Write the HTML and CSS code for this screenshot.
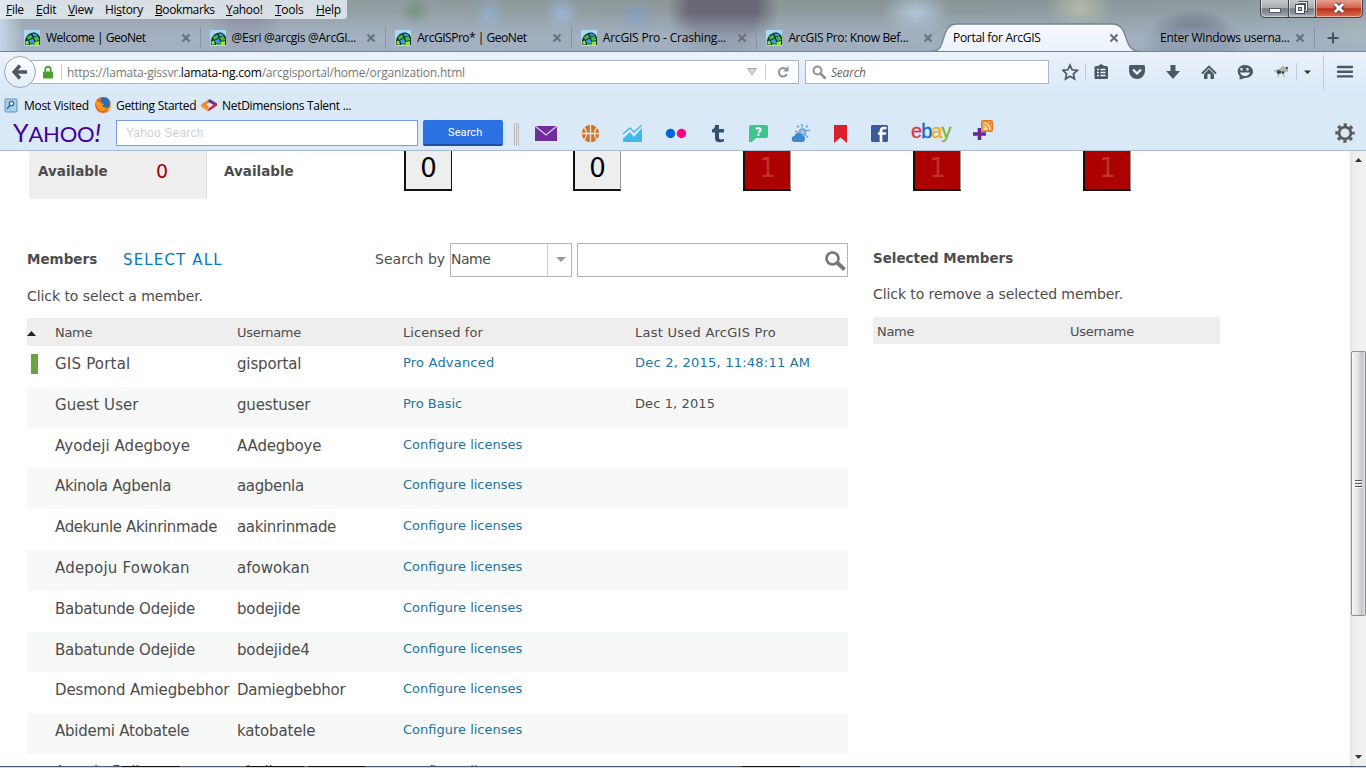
FILE: index.html
```html
<!DOCTYPE html>
<html lang="en">
<head>
<meta charset="utf-8">
<title>Portal for ArcGIS</title>
<link rel="stylesheet" href="styles.css">
</head>
<body>
<svg width="0" height="0" class="defs">
  <defs>
    <symbol id="globe" viewBox="0 0 16 16">
      <rect width="16" height="16" fill="#a9daf5"/>
      <path d="M1 15C0 8 4 3 9 2.500c4 0 6 2 7 5V15z" fill="#123038"/>
      <path d="M3 7l4-2.500 1.500 3L4 10zM9.500 7.500l4-1.500 2 4-4 1z" fill="#3fbf35"/>
      <path d="M8.500 3.500l4 .5 1 1.500-4 1zM5 10.500l4-2 1.500 4.500H6z" fill="#3c9fe6"/>
      <path d="M1.500 11.500l2.500-1 1 4H1.500zM10.500 12l4.500-1v4h-4.500z" fill="#98e23a"/>
      <path d="M6 13.500h4.500V15H6z" fill="#55c14a"/>
    </symbol>
    <symbol id="close" viewBox="0 0 10 10"><path d="M1.500 1.500l7 7m0-7l-7 7" stroke="#66727f" stroke-width="2.200"/></symbol>
  </defs>
</svg>

<header class="titlebar">
  <div class="toprow">
    <nav class="menu">
      <span class="m-file"><u>F</u>ile</span><span class="m-edit"><u>E</u>dit</span><span class="m-view"><u>V</u>iew</span><span class="m-history">Hi<u>s</u>tory</span><span class="m-book"><u>B</u>ookmarks</span><span class="m-yahoo"><u>Y</u>ahoo!</span><span class="m-tools"><u>T</u>ools</span><span class="m-help"><u>H</u>elp</span>
    </nav>
    <svg class="winbtns" width="105" height="19" viewBox="0 0 105 19">
      <defs>
        <linearGradient id="gb" x2="0" y2="1"><stop offset="0" stop-color="#c5c9cc"/><stop offset=".45" stop-color="#a8adb1"/><stop offset=".5" stop-color="#747a80"/><stop offset="1" stop-color="#a9b0b5"/></linearGradient>
        <linearGradient id="rb" x2="0" y2="1"><stop offset="0" stop-color="#e5a091"/><stop offset=".45" stop-color="#d2614a"/><stop offset=".5" stop-color="#b9301a"/><stop offset="1" stop-color="#dc7454"/></linearGradient>
      </defs>
      <path d="M.5 0v13q0 4.500 4.500 4.500H57V0z" fill="url(#gb)"/>
      <path d="M56 0v17.500h42q4.500 0 4.500-4.500V0z" fill="url(#rb)"/>
      <path d="M.5 0v13q0 4.500 4.500 4.500H98q4.500 0 4.500-4.500V0M28.500 0v17M55.500 0v17" fill="none" stroke="#3f474e"/>
      <path d="M1.500 0v12.500q0 4 4 4H27M29.500 0v16h25V0M56.500 0v16.500H97q4.500 0 4.500-4V0" fill="none" stroke="#fff" stroke-opacity=".45"/>
      <rect x="9.500" y="8.500" width="11" height="4" fill="#fff" stroke="#555b66"/>
      <path d="M38.500 2.500h8v8h-2" fill="none" stroke="#4c5260" stroke-width="3"/><path d="M38.500 2.500h8v8h-2" fill="none" stroke="#fff"/>
      <rect x="35.500" y="4.500" width="9" height="9" fill="#fff" stroke="#4c5260"/><rect x="38.500" y="7.500" width="3" height="3" fill="#b0b5bb" stroke="#4c5260"/>
      <path d="M75 4l8 8m0-8l-8 8" stroke="#4a3c44" stroke-width="5"/><path d="M75 4l8 8m0-8l-8 8" stroke="#fff" stroke-width="3"/>
    </svg>
  </div>
  <div class="tabs">
    <div class="tab"><svg class="fav"><use href="#globe"/></svg><span>Welcome | GeoNet</span><svg class="x"><use href="#close"/></svg></div>
    <div class="tab"><svg class="fav"><use href="#globe"/></svg><span class="t2">@Esri @arcgis @ArcGI...</span><svg class="x"><use href="#close"/></svg></div>
    <div class="tab"><svg class="fav"><use href="#globe"/></svg><span>ArcGISPro* | GeoNet</span><svg class="x"><use href="#close"/></svg></div>
    <div class="tab"><svg class="fav"><use href="#globe"/></svg><span class="t4">ArcGIS Pro - Crashing...</span><svg class="x"><use href="#close"/></svg></div>
    <div class="tab noline"><svg class="fav"><use href="#globe"/></svg><span class="t5">ArcGIS Pro: Know Bef...</span><svg class="x"><use href="#close"/></svg></div>
    <div class="tab active">
      <svg class="shape" width="214" height="30" viewBox="0 0 214 30">
        <defs><linearGradient id="tg" x2="0" y2="1"><stop offset="0" stop-color="#f7fafd"/><stop offset="1" stop-color="#eaf1fa"/></linearGradient></defs>
        <path d="M2 30V28.500C18 28.500 9 1 27 1H182C201 1 191 28.500 210 28.500V30z" fill="url(#tg)"/>
        <path d="M2 28.500C18 28.500 9 1 27 1H182C201 1 191 28.500 210 28.500" fill="none" stroke="#75838f" stroke-width="1.300"/>
      </svg>
      <span>Portal for ArcGIS</span><svg class="x"><use href="#close"/></svg>
    </div>
    <div class="tab last"><span>Enter Windows userna...</span><svg class="x"><use href="#close"/></svg></div>
    <svg class="plus" width="12" height="12" viewBox="0 0 12 12"><path d="M6 .5v11M.5 6h11" stroke="#47525d" stroke-width="2"/></svg>
  </div>
</header>

<section class="chrome">
  <div class="navbar">
    <div class="back"><svg width="16" height="16" viewBox="0 0 16 16"><path d="M8 1.500L2 8l6 6.500M2.500 8H15" fill="none" stroke="#4c5967" stroke-width="3.400"/></svg></div>
    <div class="urlbar">
      <svg width="10" height="13" viewBox="0 0 10 13"><path d="M2.300 7V3.500a2.700 2.700 0 015.400 0V7" fill="none" stroke="#4aa02c" stroke-width="1.800"/><rect y="5.500" width="10" height="7" rx="1" fill="#4aa02c"/></svg>
      <i class="vline"></i>
      <span class="url">https://lamata-gissvr.<b>lamata-ng.com</b>/arcgisportal/home/organization.html</span>
      <svg class="drop" width="10" height="8" viewBox="0 0 10 8"><path d="M.5 .5h9L5 7z" fill="#d5d9df" stroke="#a5acb5"/></svg>
      <i class="vline"></i>
      <svg class="reload" width="12" height="12" viewBox="0 0 12 12"><path d="M9.500 3.500A4.300 4.300 0 106 10.600a4.300 4.300 0 003.800-2.500" fill="none" stroke="#8894a2" stroke-width="2"/><path d="M11.500 0v5.500H6z" fill="#8894a2"/></svg>
    </div>
    <div class="searchbar">
      <svg width="15" height="15" viewBox="0 0 15 15"><circle cx="5.500" cy="5.500" r="4" fill="none" stroke="#8d9298" stroke-width="2"/><path d="M8.500 8.500l5 5" stroke="#8d9298" stroke-width="2.600"/></svg>
      <em>Search</em>
    </div>
    <svg class="tools" width="304" height="40" viewBox="1062 52 304 40">
      <g fill="#4b5866">
        <path d="M1070 65l2.100 4.800 5.200.5-3.900 3.500 1.100 5.100-4.500-2.700-4.500 2.700 1.100-5.100-3.900-3.500 5.200-.5z" fill="none" stroke="#4b5866" stroke-width="1.700"/>
        <path d="M1098 66h-2q-1.500 0-1.500 1.500V78q0 1 1 1h11.500q1 0 1-1V67.500q0-1.500-1.500-1.500h-2l-3.500-2z"/>
        <path d="M1097 69.500h2m1.500 0h5m-8.500 3h2m1.500 0h5m-8.500 3h2m1.500 0h5" stroke="#eef4fb" stroke-width="1.500"/>
        <path d="M1130.500 65h13q1.500 0 1.500 1.500V71a8 8 0 01-16 0v-4.500q0-1.500 1.500-1.500z"/>
        <path d="M1133 69.500l4 4 4-4" fill="none" stroke="#eef4fb" stroke-width="2.200"/>
        <path d="M1170.500 65h5v6h4.500l-7 8-7-8h4.500z"/>
        <path d="M1202 73.500l7-7 7 7" fill="none" stroke="#4b5866" stroke-width="1.900"/>
        <path d="M1204 74l5-5 5 5v5h-3.500v-5h-3v5h-3.500z"/>
        <path d="M1245 65c5 0 8 3 8 6.500s-3 6.500-8 6.500c-2 0-3 2-6 1 1-1 1-2 .5-3-4-5-1-11 5.500-11z"/>
        <path d="M1241.500 68v2.500m6-2.500v2.500" stroke="#eef4fb" stroke-width="2"/><path d="M1240 72.500h10q-1.500 3.500-5 3.500t-5-3.500z" fill="#eef4fb"/>
        <path d="M1304 70.500h7l-3.500 3.500z" fill="#2c2c2c"/>
        <path d="M1338 67h14m-14 4.700h14m-14 4.700h14" stroke="#4b5866" stroke-width="2.400" stroke-linecap="round"/>
      </g>
      <path d="M1274 71q5-2 10-1.500M1277 74l4-1m1 0l3 4m-6-4l-1 4m5-5l5-1m-7-3l3-2" fill="none" stroke="#999" stroke-width="1"/>
      <ellipse cx="1284" cy="69.500" rx="4" ry="2.800" fill="#b5b2a8"/><ellipse cx="1279" cy="72" rx="2.500" ry="1.800" fill="#3c3c38"/><circle cx="1287" cy="68" r="1.200" fill="#555"/><circle cx="1283" cy="72.500" r="1.200" fill="#333"/>
      <path d="M1085.500 63v18M1296.500 63v18M1323.500 55v36" stroke="#c2ccd8"/>
    </svg>
  </div>
  <div class="bookmarks">
    <svg width="14" height="15" viewBox="0 0 14 15"><rect x="1" y="1" width="12" height="13" rx="1" fill="#a8d1ec" stroke="#5c95c0"/><circle cx="7.500" cy="5.500" r="2.200" fill="#e4f3fc" stroke="#2f6c9f" stroke-width="1.300"/><path d="M6 7l-3 4" stroke="#2f6c9f" stroke-width="1.600"/></svg>
    <span class="bk1">Most Visited</span>
    <svg width="16" height="16" viewBox="0 0 16 16"><circle cx="8" cy="8" r="8" fill="#e8681a"/><path d="M6 .5q7-1.500 9 4 1 5-3 6.500-5 0-6-5z" fill="#2a6eb6"/><path d="M1 4l3 1 5 2-2 2q2 3 5 1-1 4-5 4-6-1-6-10z" fill="#f29a1f"/><path d="M14 4q3 6-3 10 6-1 4.500-8z" fill="#fbc82c"/></svg>
    <span class="bk2">Getting Started</span>
    <svg width="16" height="12" viewBox="0 0 16 12"><path d="M0 5.500L7 1l2 2-4 2.500 3 2-2 2z" fill="#f0822e"/><path d="M7 1l2-.8L16 4.500l-2 2.300-6-3.600z" fill="#5d358d"/><path d="M16 4.500v2L8 12l-2-1.500 7-5z" fill="#c82248"/><path d="M0 5.500v2L6 12l2-2z" fill="#f0a02e"/></svg>
    <span class="bk3">NetDimensions Talent ...</span>
  </div>
  <div class="yahoo">
    <span class="ylogo">Y<small>AHOO</small><i>!</i></span>
    <span class="yinput">Yahoo Search</span>
    <span class="ybtn">Search</span>
    <svg class="yicons" width="490" height="34" viewBox="510 115 490 34">
      <path d="M514.500 122v23M516.500 122v23M518.500 122v23" stroke="#b6b8ba"/>
      <rect x="535" y="125" width="22" height="15" fill="#6f2da0"/><path d="M535 125l11 9 11-9" fill="none" stroke="#dcc5ec" stroke-width="1.300"/>
      <circle cx="590.500" cy="132.500" r="8.700" fill="#d8721b"/><path d="M590.500 124v17M582 132.500h17M584 126q5 6.500 0 13M597 126q-5 6.500 0 13" fill="none" stroke="#dbe9f8" stroke-width="1.300"/>
      <path d="M623 141v-6l7-7 4 5 8-8v16z" fill="#3fb8ec"/><path d="M622 136l8-8 4 5 8-9" fill="none" stroke="#dbe9f8" stroke-width="4"/><path d="M623 133l7-6 4 4 8-7" fill="none" stroke="#3fb8ec" stroke-width="1.300"/>
      <circle cx="670.500" cy="132.500" r="4.700" fill="#0063dc"/><circle cx="681.500" cy="132.500" r="4.700" fill="#ff0084"/>
      <path d="M715 124h4v4h5v3.500h-5v5q0 2 2 2l3-.5v2.500q-9 2.500-9-3.500v-5.500h-3v-3q3-.8 3-4.500z" fill="#35516c"/>
      <path d="M751 124h15q2 0 2 2v9q0 2-2 2h-10l-4 4h-3v-15q0-2 2-2z" fill="#3fc48e"/>
      <path d="M756 128.300q3-2.500 4.500 0c.8 2-2 2.200-2 4m0 1v1.700" fill="none" stroke="#fff" stroke-width="2"/>
      <g stroke="#62a7da" stroke-width="1.500"><circle cx="802.500" cy="131" r="3" fill="#9cc8ea"/><path d="M802 123v3.500m0 9v3m-7-8h3m8-1h4m-13-5l2 2m9-2l-2 2m-1 7l3 3"/></g>
      <path d="M795 141a3 3 0 01-.5-6 4.200 4.200 0 018-.5q3 .5 2.500 3.500 0 3-3 3z" fill="#3b8bca"/>
      <path d="M834 124h13v18l-6.500-5.500L834 142z" fill="#da202a"/>
      <rect x="871" y="124" width="17" height="17" rx="1.500" fill="#3c5a99"/><path d="M881 141v-11q0-3 3-3h2.500M878 132.500h8" fill="none" stroke="#fff" stroke-width="2.700"/>
      <path d="M979.500 127v12m-6.500-6h13" stroke="#642b96" stroke-width="3.600"/>
      <rect x="981.500" y="119.500" width="11" height="11" rx="1" fill="#f69432" stroke="#d97a20"/><path d="M983.500 122q6 0 6.500 7M983.500 125q3 .5 3.500 4" fill="none" stroke="#fff" stroke-width="1.200"/><circle cx="984.500" cy="128" r="1" fill="#fff"/>
    </svg>
    <span class="ebay"><i class="e">e</i><i class="b">b</i><i class="a">a</i><i class="y">y</i></span>
    <svg class="gear" width="20" height="20" viewBox="0 0 20 20"><circle cx="10" cy="10" r="5.900" fill="none" stroke="#5c5c5c" stroke-width="2.700"/><circle cx="10" cy="10" r="8.300" fill="none" stroke="#5c5c5c" stroke-width="2.800" stroke-dasharray="3.260 3.260" stroke-dashoffset="1.630"/></svg>
  </div>
</section>

<main class="viewport">
  <div class="page">
    <div class="licenses">
      <div class="availbox"><b>Available</b><span>0</span></div>
      <b class="avail2">Available</b>
      <div class="counts">
        <span class="count full">0</span><span class="count">0</span><span class="count red">1</span><span class="count red">1</span><span class="count red">1</span>
      </div>
    </div>
    <div class="panels">
      <section class="members">
        <div class="bar">
          <b>Members</b><a class="selall">SELECT ALL</a>
          <span class="by">Search by</span>
          <span class="select"><span>Name</span><i><svg width="10" height="5" viewBox="0 0 10 5"><path d="M0 0h10L5 5z" fill="#999"/></svg></i></span>
          <span class="find"><svg width="21" height="20" viewBox="0 0 21 20"><circle cx="7.500" cy="7.500" r="6" fill="none" stroke="#757575" stroke-width="2.600"/><path d="M12.500 12l7 6.500" stroke="#757575" stroke-width="3.800"/></svg></span>
        </div>
        <p class="hint">Click to select a member.</p>
        <div class="row head"><i class="mark"><svg width="9" height="5" viewBox="0 0 9 5"><path d="M0 5h9L4.500 0z" fill="#222"/></svg></i><span class="nm">Name</span><span class="nm">Username</span><span>Licensed for</span><span class="lu">Last Used ArcGIS Pro</span></div>
        <div class="row"><i class="mark"><i class="green"></i></i><span class="gis">GIS Portal</span><span>gisportal</span><a class="pro">Pro Advanced</a><a class="lu">Dec 2, 2015, 11:48:11 AM</a></div>
        <div class="row alt"><i></i><span class="wide">Guest User</span><span>guestuser</span><a>Pro Basic</a><a class="lu plain">Dec 1, 2015</a></div>
        <div class="row"><i></i><span class="wide">Ayodeji Adegboye</span><span>AAdegboye</span><a>Configure licenses</a></div>
        <div class="row alt"><i></i><span class="tight">Akinola Agbenla</span><span class="tight">aagbenla</span><a>Configure licenses</a></div>
        <div class="row"><i></i><span class="tight">Adekunle Akinrinmade</span><span class="tight">aakinrinmade</span><a>Configure licenses</a></div>
        <div class="row alt"><i></i><span class="gis">Adepoju Fowokan</span><span class="wide">afowokan</span><a>Configure licenses</a></div>
        <div class="row"><i></i><span class="semi">Babatunde Odejide</span><span>bodejide</span><a>Configure licenses</a></div>
        <div class="row alt"><i></i><span class="semi">Babatunde Odejide</span><span>bodejide4</span><a>Configure licenses</a></div>
        <div class="row"><i></i><span>Desmond Amiegbebhor</span><span class="semi">Damiegbebhor</span><a>Configure licenses</a></div>
        <div class="row alt"><i></i><span class="semi">Abidemi Atobatele</span><span>katobatele</span><a>Configure licenses</a></div>
        <div class="row"><i></i><span>Amodu Bello</span><span>abello</span><a>Configure licenses</a></div>
      </section>
      <section class="selected">
        <h2>Selected Members</h2>
        <p>Click to remove a selected member.</p>
        <div class="shead"><span>Name</span><span>Username</span></div>
      </section>
    </div>
  </div>
  <aside class="scroll">
    <svg class="up" width="7" height="5" viewBox="0 0 7 5"><path d="M0 4h7L3.500 0z" fill="#333"/></svg>
    <div class="thumb"><i></i><i></i><i></i></div>
    <svg class="down" width="7" height="5" viewBox="0 0 7 5"><path d="M0 0h7L3.500 4z" fill="#333"/></svg>
  </aside>
</main>
<footer class="taskbar"><i class="s1"></i><i class="s2"></i><i class="s3"></i><i class="s4"></i></footer>
</body>
</html>
```

FILE: styles.css
```css
* { box-sizing: border-box; }
body { margin: 0; width: 1366px; height: 768px; overflow: hidden; background: #fff; display: flex; flex-direction: column; font-family: "Open Sans", "Noto Sans", sans-serif; font-size: 12px; color: #000; }
i { font-style: normal; }
svg { flex: none; display: block; }
.defs { position: absolute; }
span, a, b { white-space: nowrap; }

/* title bar with the blurred desktop behind it */
.titlebar { height: 52px; flex: none; display: flex; flex-direction: column; border-bottom: 1px solid #75838f; overflow: hidden;
  background:
    linear-gradient(90deg, #c6d6e8 0, rgba(190,205,222,0) 22px),
    linear-gradient(180deg, transparent 12px, rgba(164,178,196,.75) 38px, rgba(160,174,192,.75)),
    radial-gradient(ellipse 56px 56px at 723px 10px, rgba(98,94,110,.85) 60%, transparent),
    radial-gradient(ellipse 52px 38px at 1193px 48px, rgba(92,98,118,.85) 60%, transparent),
    radial-gradient(ellipse 38px 44px at 245px 22px, rgba(125,122,145,.6) 30%, transparent),
    radial-gradient(ellipse 20px 18px at 637px 18px, rgba(126,157,193,.9), transparent),
    radial-gradient(ellipse 18px 18px at 562px 14px, rgba(155,183,220,.9), transparent),
    radial-gradient(ellipse 16px 18px at 489px 16px, rgba(145,175,208,.9), transparent),
    radial-gradient(ellipse 16px 16px at 415px 12px, rgba(105,140,112,.7), transparent),
    radial-gradient(ellipse 34px 24px at 916px 14px, rgba(182,203,224,.9), transparent),
    radial-gradient(ellipse 34px 26px at 1080px 8px, rgba(182,190,170,.9), transparent),
    radial-gradient(ellipse 30px 26px at 1356px 40px, rgba(178,190,172,.9), transparent),
    linear-gradient(180deg, rgba(120,130,124,.5), rgba(164,178,194,.2)),
    linear-gradient(90deg, #a9b5c1, #a6b2be 30%, #9da8b0 60%, #9caab5 80%, #a9b7c6); }
.toprow { height: 23px; flex: none; display: flex; justify-content: space-between; }
.menu { width: 347px; height: 19px; padding-left: 6px; display: flex; line-height: 20px; background: rgba(232,238,243,.82); border-radius: 0 0 4px 0; letter-spacing: -.3px; }
.m-file { width: 30px; } .m-edit { width: 32px; } .m-view { width: 37px; } .m-history { width: 50px; }
.m-book { width: 71px; letter-spacing: -.4px; } .m-yahoo { width: 49px; } .m-tools { width: 41px; }
.winbtns { margin-right: 1px; }
.tabs { height: 29px; display: flex; padding-left: 15px; }
.tab { width: 185.600px; height: 29px; flex: none; display: flex; align-items: center; padding-left: 9px; position: relative; letter-spacing: -.48px; padding-bottom: 1px; }
.tab .t2 { letter-spacing: -.3px; } .tab .t4 { letter-spacing: -.2px; } .tab .t5 { letter-spacing: -.35px; }
.tab::after { content: ""; position: absolute; right: 0; top: 4px; height: 22px; width: 1px; background: #8793a0; }
.tab.noline::after, .tab.active::after { display: none; }
.fav { width: 16px; height: 16px; margin-right: 6px; margin-top: 2px; }
.x { width: 10px; height: 10px; position: absolute; right: 10px; top: 10px; }
.tab.active { padding-left: 10px; width: 188px; letter-spacing: -.3px; }
.tab.active span { position: relative; }
.tab.active .x { right: 12px; }
.shape { position: absolute; left: -13px; top: 0; }
.tab.last { width: 184px; padding-left: 29px; letter-spacing: -.25px; }
.tab.last .x { right: 10px; }
.plus { margin: 9px 0 0 12px; }

/* toolbars */
.chrome { height: 98px; flex: none; background: linear-gradient(#ebf2fa, #dae9f8 40px); display: flex; flex-direction: column; }
.navbar { height: 40px; display: flex; align-items: center; padding-left: 4px; }
.back { width: 32px; height: 32px; flex: none; border-radius: 50%; border: 1px solid #99a8b7; background: linear-gradient(#fdfeff, #e4ecf5); display: flex; align-items: center; justify-content: center; z-index: 1; }
.urlbar { width: 780px; height: 24px; flex: none; margin-left: -17px; padding-left: 23px; border: 1px solid #a7b7c8; background: #fff; display: flex; align-items: center; }
.vline { width: 1px; height: 16px; background: #ccd2d8; margin-left: 8px; }
.url { width: 682px; padding-left: 5px; color: #777; letter-spacing: -.2px; }
.url b { font-weight: 400; color: #000; }
.urlbar .drop { margin-left: 3px; }
.reload { margin-left: 11px; }
.searchbar { width: 244px; height: 24px; flex: none; margin-left: 6px; border: 1px solid #a7b7c8; background: #fff; display: flex; align-items: center; padding-left: 6px; gap: 4px; color: #666; letter-spacing: -.2px; }
.tools { margin-left: 13px; }
.bookmarks { height: 26px; display: flex; align-items: center; padding-left: 4px; letter-spacing: -.3px; }
.bk1, .bk2, .bk3 { margin-left: 6px; }
.bk1 { width: 71px; } .bk2 { width: 85px; margin-left: 5px; } .bk3 { margin-left: 5px; }
.yahoo { height: 30px; display: flex; align-items: center; padding-left: 13px; position: relative; }
.ylogo { width: 103px; font: 25px/26px Lato, sans-serif; color: #450099; letter-spacing: -.2px; }
.ylogo small { font-size: 22px; } .ylogo i { font-style: italic; font-size: 26px; }
.yinput { width: 302px; height: 26px; border: 1px solid #7b98f2; background: #fff; padding-left: 9px; font: 12px/25px "Liberation Sans", sans-serif; color: #cfcfcf; letter-spacing: .2px; }
.ybtn { width: 80px; height: 26px; margin-left: 5px; padding-left: 25px; border-radius: 2px; background: #2c71e1; border-bottom: 2px solid #204f9e; color: #fff; font: 11px/26px Roboto, sans-serif; letter-spacing: .1px; }
.yicons { margin-left: 7px; }
.ebay { position: absolute; left: 911px; top: 2px; font: 20px/22px "Liberation Sans", sans-serif; letter-spacing: -1px; -webkit-text-stroke: .3px; }
.e { color: #e0323f; } .b { color: #1466d0; } .a { color: #f2ae13; } .y { color: #82b41f; }
.gear { margin-left: auto; margin-right: 11px; }

/* portal page */
.viewport { flex: none; height: 616px; border-top: 1px solid #a9b9d0; display: flex; overflow: hidden; font-family: "DejaVu Sans", Verdana, sans-serif; font-size: 14px; color: #4c4c4c; }
.page { width: 1350px; height: 615px; overflow: hidden; padding-left: 27px; }
.licenses { height: 92px; display: flex; font-size: 13.500px; }
.availbox { width: 178px; height: 48px; margin-left: 2px; background: #eee; border-right: 1px solid #ddd; display: flex; padding-left: 9px; line-height: 41px; }
.availbox b { width: 118px; }
.availbox span { font-size: 19px; color: #a80000; line-height: 41px; }
.avail2 { width: 180px; padding-left: 17px; line-height: 41px; }
.counts { display: flex; gap: 122px; padding-left: 17px; }
.count { width: 48px; height: 40px; background: #eee; border: solid #111; border-width: 0 1px 2px 2px; border-right-color: #999; font-size: 26px; line-height: 34px; text-align: center; color: #000; }
.count.full { border-right-color: #111; margin-right: -1px; }
.count.red { background: #ad0000; color: #bb352c; }
.panels { display: flex; }
.members { width: 821px; flex: none; }
.bar { height: 34px; display: flex; line-height: 32px; }
.bar b { width: 96px; font-size: 13.500px; }
.selall { width: 252px; color: #007ac2; font-size: 15px; letter-spacing: 1.150px; line-height: 34px; }
.by { width: 75px; letter-spacing: .05px; }
.select { width: 122px; border: 1px solid #b5b5b5; display: flex; margin-right: 5px; }
.select span { width: 96px; letter-spacing: -.5px; line-height: 30px; }
.select i { flex: 1; border-left: 1px solid #ccc; display: flex; align-items: center; justify-content: center; padding-left: 3px; padding-bottom: 1px; }
.find { width: 271px; border: 1px solid #b5b5b5; display: flex; align-items: center; justify-content: flex-end; padding-right: 1px; padding-top: 1px; }
.hint { margin: 0; height: 41px; line-height: 38px; letter-spacing: -.07px; }
.row { height: 40.800px; display: grid; grid-template-columns: 28px 182px 166px 232px 1fr; line-height: 37px; font-size: 15px; letter-spacing: -.15px; white-space: nowrap; }
.gis { letter-spacing: .2px; }
.wide { letter-spacing: .05px; }
.semi { letter-spacing: -.25px; }
.tight { letter-spacing: -.35px; }
.alt { background: #f7f9f8; }
.row a { font-size: 13px; color: #20749f; letter-spacing: 0; line-height: 34.600px; }
.row a.pro { letter-spacing: .2px; }
.row a.lu { letter-spacing: .230px; }
.row a.plain { color: #4c4c4c; letter-spacing: .1px; }
.head { height: 28px; background: #eee; font-size: 13px; line-height: 29px; letter-spacing: .05px; }
.head .nm { letter-spacing: -.3px; }
.head .lu { letter-spacing: .25px; }
.head .mark { padding: 13px 0 0; }
.green { display: block; width: 7px; height: 20px; margin: 8px 0 0 4px; background: #68a540; }
.selected { width: 347px; margin-left: 25px; }
.selected h2 { margin: 0; font-size: 13.450px; line-height: 32px; height: 32px; }
.selected p { margin: 0; height: 42px; line-height: 38px; letter-spacing: -.08px; white-space: nowrap; }
.shead { height: 27px; background: #eee; padding-left: 4px; display: flex; font-size: 13px; line-height: 29px; letter-spacing: -.3px; }
.shead span:first-child { width: 193px; }
.scroll { width: 16px; background: linear-gradient(90deg, #e4e4e4, #f0f0f0 30%, #f0f0f0); display: flex; flex-direction: column; align-items: center; }
.up { margin-top: 7px; }
.thumb { width: 15px; height: 265px; margin-top: 188px; border: 1px solid #8e8e8e; border-radius: 2px; background: linear-gradient(90deg, #f8f8f8, #e4e4e6 45%, #c5c6ca 75%, #dedfe2); display: flex; flex-direction: column; gap: 1px; align-items: center; justify-content: center; }
.thumb i { width: 7px; height: 2px; background: #555; border-bottom: 1px solid #fff; }
.down { margin-top: auto; margin-bottom: 6px; }
.taskbar { flex: none; height: 2px; border-top: 1px solid #4b5a6c; background: #ccdaeb; display: flex; }
.taskbar i { height: 1px; margin-top: -1px; background: #111; }
.s1 { width: 58px; margin-left: 122px; } .s2 { width: 58px; margin-left: 66px; } .s3 { width: 57px; margin-left: 4px; } .s4 { width: 58px; margin-left: 377px; }
```
